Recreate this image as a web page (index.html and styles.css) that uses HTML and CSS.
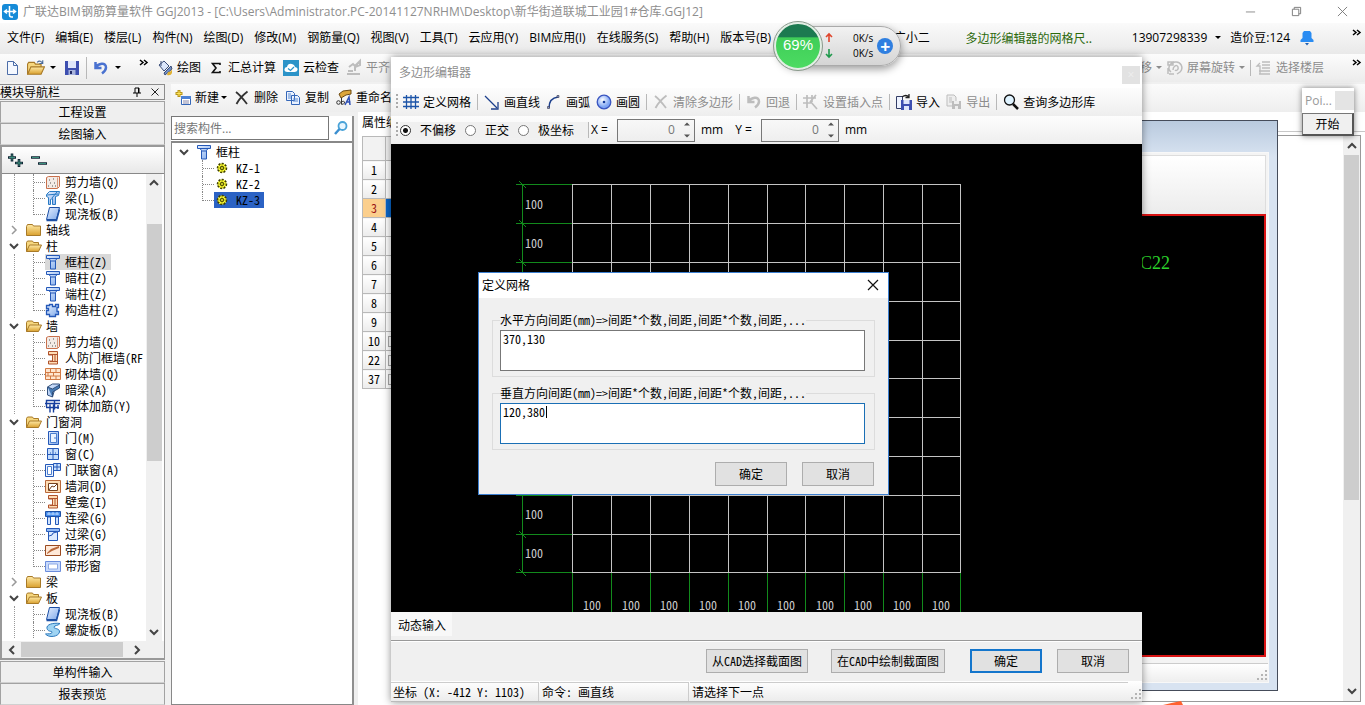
FILE: index.html
```html
<!DOCTYPE html>
<html lang="zh-CN">
<head>
<meta charset="utf-8">
<title>广联达BIM钢筋算量软件 GGJ2013</title>
<link rel="stylesheet" href="styles.css">
</head>
<body>
<svg class="defs" aria-hidden="true">
  <defs>
    <linearGradient id="gb" x2="1" y2="1"><stop offset="0" stop-color="#e4efff"/><stop offset="1" stop-color="#7fa9ea"/></linearGradient>
    <linearGradient id="gf" x2="0" y2="1"><stop offset="0" stop-color="#ffeaa6"/><stop offset="1" stop-color="#d9a02e"/></linearGradient>
    <radialGradient id="gc" cx=".4" cy=".35"><stop offset="0" stop-color="#fff"/><stop offset="1" stop-color="#7fa6f5"/></radialGradient>
  </defs>
  <symbol id="folder" viewBox="0 0 16 16"><path d="M.5 4.500l1-2h5l1 1.500h7v9.500h-14z" fill="url(#gf)" stroke="#a87a28"/></symbol>
  <symbol id="folderopen" viewBox="0 0 16 16"><path d="M.5 13.500v-9l1-1.500h5l1 1.500h5v3" fill="#f6d77f" stroke="#a87a28"/><path d="M.5 13.500l3-6.500h12l-3 6.500z" fill="url(#gf)" stroke="#a87a28"/></symbol>
  <symbol id="column" viewBox="0 0 16 16"><path d="M1.500 1.500h13v3h-2.500l-1.500 2v8.500h-5v-8.500l-1.500-2h-2.500z" fill="url(#gb)" stroke="#2458b8"/><path d="M2 4.500h12M5.500 7h5" stroke="#2458b8"/></symbol>
  <symbol id="swall" viewBox="0 0 16 16"><path d="M1.500 3.500l2-1h11v10l-2 2h-11z" fill="#f3ebe6" stroke="#c9704c"/><path d="M12.500 3.500v11" stroke="#d99a7c"/><path d="M4 6h1M8 5h1M5 9h1M9 9h1M3 12h1M7 12h1M10 12h1" stroke="#555"/></symbol>
  <symbol id="beam" viewBox="0 0 16 16"><path d="M1.500 4.500l3-3h10l-1 4-3 1v8h-3v-6l-2 1v5h-2v-7l-2-1z" fill="url(#gb)" stroke="#287bc4"/><path d="M2 5l11-1M7 8l5-6" stroke="#287bc4"/></symbol>
  <symbol id="slab" viewBox="0 0 16 16"><path d="M4.500 1.500h10l-3 12h-10z" fill="url(#gb)" stroke="#1d50a5"/><path d="M1.500 14.500h10l3-11" fill="none" stroke="#1d50a5" stroke-width="1.500"/></symbol>
  <symbol id="ccol" viewBox="0 0 16 16"><path d="M4.500 2.500h3v2h3v-2h3v3h-1.500v4h1.500v3h-3v2h-6v-2h-3v-4h2v-2h-2v-3h3z" fill="url(#gb)" stroke="#2458b8" stroke-width="1.300"/></symbol>
  <symbol id="door2" viewBox="0 0 16 16"><path d="M3.500 1.500h9v12.500h-9v-3h4v-6h-4z" fill="#ffdcb4" stroke="#b0532c"/><path d="M4 4.500h8M10 5v6M5 11.500h7" stroke="#b0532c"/></symbol>
  <symbol id="brick" viewBox="0 0 16 16"><path d="M.5 2.500h15v11h-15z" fill="#ffe6cf" stroke="#d17a45"/><path d="M1 6.500h14M1 10h14M5.500 3v3.500M11 3v3.500M3 6.500v3.500M8.500 6.500v3.500M5.500 10v3.500M11 10v3.500" stroke="#d17a45"/></symbol>
  <symbol id="hbeam" viewBox="0 0 16 16"><path d="M2.500 5l5-3h7v3l-5 3-2 7-5-2z" fill="url(#gb)" stroke="#304f7c"/><path d="M2.500 5l5 2 7-4v3l-7 4v5" fill="#477bb5" stroke="#304f7c"/></symbol>
  <symbol id="rebar" viewBox="0 0 16 16"><path d="M1.500 9V2.500h8v9M0 5.500h15M5 6.500v8M8.500 6.500v8M1 9.500h13M10 2.500h5M13 7v4" fill="none" stroke="#173f9e" stroke-width="1.400"/></symbol>
  <symbol id="door" viewBox="0 0 16 16"><path d="M3.500 1.500h10v13h-10z" fill="url(#gb)" stroke="#2458b8"/><path d="M5.500 3.500h6v9h-6zM10 7v2" fill="#eaf3ff" stroke="#4c7fd0"/></symbol>
  <symbol id="win" viewBox="0 0 16 16"><path d="M2.500 2.500h11v11h-11z" fill="#c6defd" stroke="#2458b8"/><path d="M8 3v10M3 8.500h10M5 7h1M10 7h1" stroke="#2458b8"/></symbol>
  <symbol id="doorwin" viewBox="0 0 16 16"><path d="M.5 2.500h8v12h-8z" fill="#eef5ff" stroke="#2458b8"/><path d="M2.500 4.500h4v8h-4z" fill="#fff" stroke="#4c7fd0"/><path d="M8.500 1.500h7v7h-7zM12 1.500v7M8.500 5h7" fill="#c6defd" stroke="#2458b8"/></symbol>
  <symbol id="hole" viewBox="0 0 16 16"><path d="M.5 2.500h15v12h-15z" fill="#ffdcb4" stroke="#b9683a"/><path d="M3.500 5.500h9v7h-9z" fill="#fff" stroke="#74401d"/><path d="M4 12l3-4 2 1 3-3" fill="none" stroke="#74401d"/></symbol>
  <symbol id="lbeam" viewBox="0 0 16 16"><path d="M.5 1.500h15v5h-15z" fill="#438aea" stroke="#1d50a5"/><path d="M2 4h12M4 2v3M8 2v3M12 2v3" stroke="#bddaff"/><path d="M2.500 7h3v7.500h-3zM10.500 7h3v7.500h-3z" fill="#cfe3ff" stroke="#2458b8"/></symbol>
  <symbol id="gbeam" viewBox="0 0 16 16"><path d="M1.500 2.500h13v3h-13z" fill="#8fb8f3" stroke="#2458b8"/><path d="M3.500 5.500h9v9h-9z" fill="#dceaff" stroke="#2458b8"/><path d="M4 10l3-1 1-2 4-1" fill="none" stroke="#2458b8"/></symbol>
  <symbol id="bhole" viewBox="0 0 16 16"><path d="M.5 3.500h15v10h-15z" fill="#ffe9d8" stroke="#9a4a20"/><path d="M2 11l4-4 8-3v2l-7 3-5 3z" fill="#b9683a"/></symbol>
  <symbol id="bwin" viewBox="0 0 16 16"><path d="M.5 3.500h15v10h-15z" fill="#c8dafb" stroke="#6a8cdc"/><path d="M3.500 6h9v5h-9z" fill="#fff" stroke="#8ea9e6"/></symbol>
  <symbol id="spiral" viewBox="0 0 16 16"><path d="M15 1.500C8 .5 1 2.500 2 6.500s6 2 5 4-4 1-6.500 1.500c3 4 13 3 14-2 .5-4-6-3-5.500-5s4-1 6-3.500z" fill="#9fd4f3" stroke="#2b78bd"/></symbol>
  <symbol id="gear" viewBox="0 0 12 12"><circle cx="6" cy="6" r="4.500" fill="#ff3" stroke="#3c3c00" stroke-width="1.500" stroke-dasharray="2 1.400"/><path d="M6 1.500v9M1.500 6h9M3 3l6 6M9 3l-6 6" stroke="#6b6b00" stroke-width=".6"/><circle cx="6" cy="6" r="1.500" fill="#ff3" stroke="#3c3c00"/></symbol>
  <symbol id="down" viewBox="0 0 10 10"><path d="M1 3l4 4 4-4" fill="none" stroke="#444" stroke-width="2"/></symbol>
  <symbol id="right" viewBox="0 0 10 10"><path d="M3 1l4 4-4 4" fill="none" stroke="#999" stroke-width="1.500"/></symbol>
  <symbol id="caret" viewBox="0 0 6 4"><path d="M0 0h6l-3 3z" fill="currentColor"/></symbol>
  <symbol id="more" viewBox="0 0 10 8"><path d="M1 1l3 2.500-3 2.500M5 1l3 2.500-3 2.500" fill="none" stroke="#000" stroke-width="1.500"/></symbol>
  <symbol id="undo" viewBox="0 0 16 16"><path d="M2.500 2v6h6M3 7.500c2-4 10-6 10 0 0 3-2 4.500-4 6" fill="none" stroke="currentColor" stroke-width="2.500"/></symbol>
  <symbol id="cross" viewBox="0 0 16 16"><path d="M2 2c4 3 8 8 11 12M13.500 1.500C9 5 5 9 2.500 14" fill="none" stroke="currentColor" stroke-width="1.800"/></symbol>
  <symbol id="grip" viewBox="0 0 14 14"><path d="M11 2h2v2h-2zM7 6h2v2H7zM11 6h2v2h-2zM3 10h2v2H3zM7 10h2v2H7zM11 10h2v2h-2z" fill="#b4b4b4"/></symbol>
</svg>

<div class="app">
  <header class="titlebar">
    <svg class="i16" viewBox="0 0 16 16"><rect width="16" height="16" rx="3" fill="#168bd8"/><path d="M7.500 2v9q0 2 2 2h1.500M3 7.500h10M5 5.500l-2.500 2 2.500 2M11 5.500l2.500 2-2.500 2" fill="none" stroke="#fff" stroke-width="1.500"/></svg>
    <span class="caption">广联达BIM钢筋算量软件 GGJ2013 - [C:\Users\Administrator.PC-20141127NRHM\Desktop\新华街道联城工业园1#仓库.GGJ12]</span>
    <div class="winbtns">
      <button aria-label="最小化"><svg viewBox="0 0 12 12"><path d="M1 6.500h10" stroke="#888"/></svg></button>
      <button aria-label="还原"><svg viewBox="0 0 12 12"><path d="M1.500 3.500h7v7h-7zM3.500 3.500v-2h7v7h-2" fill="none" stroke="#777"/></svg></button>
      <button aria-label="关闭"><svg viewBox="0 0 12 12"><path d="M1 1l10 10M11 1L1 11" stroke="#777"/></svg></button>
    </div>
  </header>

  <nav class="menubar">
    <button>文件(F)</button><button>编辑(E)</button><button>楼层(L)</button><button>构件(N)</button><button>绘图(D)</button><button>修改(M)</button><button>钢筋量(Q)</button><button>视图(V)</button><button>工具(T)</button><button>云应用(Y)</button><button>BIM应用(I)</button><button>在线服务(S)</button><button>帮助(H)</button><button>版本号(B)</button>
    <div class="account">
      <button class="user">广小二</button>
      <a class="tip" href="#">多边形编辑器的网格尺..</a>
      <button class="phone">13907298339 <svg class="caret"><use href="#caret"/></svg></button>
      <span class="beans">造价豆:124</span>
      <svg class="bell" viewBox="0 0 14 16"><path d="M4 1h6l1.500 2v5l2 2v2h-13v-2l2-2v-5z" fill="#2a8cf2"/><path d="M5 13h4l-2 2.500z" fill="#1c5fb4"/></svg>
      <svg class="more"><use href="#more"/></svg>
    </div>
  </nav>

  <div class="toolbar">
    <button aria-label="新建"><svg class="i16" viewBox="0 0 16 16"><path d="M3.500 1.500h6l4 4v9h-10z" fill="#f4f8ff" stroke="#4c6da8"/><path d="M9.500 1.500v4h4" fill="none" stroke="#4c6da8"/></svg></button>
    <button aria-label="打开" class="open"><svg class="i20" viewBox="0 0 16 16"><use href="#folderopen"/><path d="M9 3c2-2 4-1 5 1M14 1v3h-3" fill="none" stroke="#4a6a9a"/></svg><svg class="caret"><use href="#caret"/></svg></button>
    <button aria-label="保存"><svg class="i16" viewBox="0 0 16 16"><path d="M1 1h14v14H1z" fill="#3d4fb0"/><path d="M4 1h8v7H4z" fill="#dfe6fb"/><path d="M4.500 10h7v5h-7z" fill="#a9b4dc"/><path d="M6 11h2v3H6z" fill="#222b66"/></svg></button>
    <i class="sep"></i>
    <button aria-label="撤销" class="undo"><svg class="i16"><use href="#undo"/></svg><svg class="caret"><use href="#caret"/></svg></button>
    <svg class="more first"><use href="#more"/></svg>
    <button><svg class="i16" viewBox="0 0 16 16"><path d="M2 5l5-4 5 5-5 5z" fill="#dbe6fa" stroke="#3a4d78"/><path d="M4 1v5M14 6l-7 7 1 2 7-6z" fill="#718fc7" stroke="#3a4d78"/><path d="M11 12q4 0 4-4v5q-1 3-5 2z" fill="#e0b030"/></svg>绘图</button>
    <button class="sum"><svg class="i16" viewBox="0 0 16 16"><path d="M12 5V3.500H4.500L8 8l-3.500 4.500H12V11" fill="none" stroke="#111" stroke-width="1.600"/></svg>汇总计算</button>
    <button><svg class="i16" viewBox="0 0 16 16"><path d="M0 0h16v16H0z" fill="#2b93c8"/><path d="M4.500 12q-3.500 0-3-3 .5-2 2.500-2 1-4 5-3 2.500.5 3 3 3 .5 2.500 3-.5 2-3 2z" fill="#fff"/><path d="M5 8.500l2.500 2L11 7" fill="none" stroke="#2b93c8" stroke-width="1.300"/></svg>云检查</button>
    <button class="off"><svg class="i16" viewBox="0 0 16 16"><path d="M1 14h13M2 11h5M9 11V6l5-5v4l-5 2M3 7l4-3 2 2" fill="none" stroke="currentColor" stroke-width="2"/></svg>平齐</button>
    <div class="viewtools">
      <button class="off">移 <svg class="caret"><use href="#caret"/></svg></button>
      <button class="off"><svg class="i16" viewBox="0 0 16 16"><path d="M1 2h5v3H1zM2 14h5M4 12c-4-3-2-9 4-10s9 6 5 10l-3 2M6 10c0-4 4-6 5-3s-2 4-3 3M1 8v6" fill="none" stroke="currentColor" stroke-width="1.500"/></svg>屏幕旋转<svg class="caret"><use href="#caret"/></svg></button>
      <i class="sep"></i>
      <button class="off"><svg class="i16" viewBox="0 0 16 16"><path d="M6 2h8M6 5h8M6 8h8M3 11h11M3 14h11M4 3L1 6h3v8" fill="none" stroke="currentColor" stroke-width="1.300"/></svg>选择楼层</button>
      <svg class="more"><use href="#more"/></svg>
    </div>
  </div>

  <div class="workspace">
    <aside class="nav">
      <div class="navhead"><span>模块导航栏</span><button aria-label="固定"><svg viewBox="0 0 10 10"><path d="M3 1h4v5M3 1v5M1 6h8M5 6v4M6.500 1v5" fill="none" stroke="#000"/></svg></button><button aria-label="关闭"><svg viewBox="0 0 10 10"><path d="M1.500 1.500l7 7M8.500 1.500l-7 7" stroke="#222"/></svg></button></div>
      <button class="navbtn">工程设置</button>
      <button class="navbtn">绘图输入</button>
      <div class="navbox">
        <div class="expand">
          <button aria-label="全部展开"><svg viewBox="0 0 18 16"><path d="M1 5.500h8M5 1.500v8M8 11h8M12 7v8" stroke="#123" stroke-width="2.600"/><path d="M2 5.500h6M5 2.500v6M9 11h6M12 8v6" stroke="#3b8f7c"/></svg></button>
          <button aria-label="全部折叠"><svg viewBox="0 0 18 16"><path d="M1 5.500h9M8 11.500h9" stroke="#123" stroke-width="2.600"/><path d="M2 5.500h7M9 11.500h7" stroke="#3b8f7c"/></svg></button>
        </div>
        <div class="treewrap">
          <ul class="tree">
            <li><ul class="kids">
              <li><svg><use href="#swall"/></svg>剪力墙(Q)</li><li><svg><use href="#beam"/></svg>梁(L)</li><li><svg><use href="#slab"/></svg>现浇板(B)</li></ul></li>
            <li><div class="node"><svg class="chev"><use href="#right"/></svg><svg><use href="#folder"/></svg>轴线</div></li>
            <li><div class="node"><svg class="chev"><use href="#down"/></svg><svg><use href="#folderopen"/></svg>柱</div><ul class="kids">
              <li><span class="sel"><svg><use href="#column"/></svg>框柱(Z)</span></li><li><svg><use href="#column"/></svg>暗柱(Z)</li><li><svg><use href="#column"/></svg>端柱(Z)</li><li><svg><use href="#ccol"/></svg>构造柱(Z)</li></ul></li>
            <li><div class="node"><svg class="chev"><use href="#down"/></svg><svg><use href="#folderopen"/></svg>墙</div><ul class="kids">
              <li><svg><use href="#swall"/></svg>剪力墙(Q)</li><li><svg><use href="#door2"/></svg>人防门框墙(RF</li><li><svg><use href="#brick"/></svg>砌体墙(Q)</li><li><svg><use href="#hbeam"/></svg>暗梁(A)</li><li><svg><use href="#rebar"/></svg>砌体加筋(Y)</li></ul></li>
            <li><div class="node"><svg class="chev"><use href="#down"/></svg><svg><use href="#folderopen"/></svg>门窗洞</div><ul class="kids">
              <li><svg><use href="#door"/></svg>门(M)</li><li><svg><use href="#win"/></svg>窗(C)</li><li><svg><use href="#doorwin"/></svg>门联窗(A)</li><li><svg><use href="#hole"/></svg>墙洞(D)</li><li><svg><use href="#door2"/></svg>壁龛(I)</li><li><svg><use href="#lbeam"/></svg>连梁(G)</li><li><svg><use href="#gbeam"/></svg>过梁(G)</li><li><svg><use href="#bhole"/></svg>带形洞</li><li><svg><use href="#bwin"/></svg>带形窗</li></ul></li>
            <li><div class="node"><svg class="chev"><use href="#right"/></svg><svg><use href="#folder"/></svg>梁</div></li>
            <li><div class="node"><svg class="chev"><use href="#down"/></svg><svg><use href="#folderopen"/></svg>板</div><ul class="kids cut">
              <li><svg><use href="#slab"/></svg>现浇板(B)</li><li><svg><use href="#spiral"/></svg>螺旋板(B)</li></ul></li>
          </ul>
          <div class="vbar"><svg class="arr up"><use href="#down"/></svg><i class="thumb"></i><svg class="arr"><use href="#down"/></svg></div>
        </div>
        <div class="hbar"><svg class="arr left"><use href="#down"/></svg><i class="thumb"></i><svg class="arr rt"><use href="#down"/></svg></div>
      </div>
      <button class="navbtn">单构件输入</button>
      <button class="navbtn">报表预览</button>
    </aside>

    <main class="main">
      <div class="subbar">
        <button><svg class="i16" viewBox="0 0 16 16"><path d="M6.500 6.500h9v8h-9z" fill="#fff" stroke="#3567b8"/><path d="M6 6h10v3H6z" fill="#4c82d6"/><path d="M8 11h6M8 13h6" stroke="#88a"/><path d="M4 0v7M.5 3.500h7" stroke="#b8961a" stroke-width="3"/><path d="M4 1v5M1.500 3.500h5" stroke="#ffe55c"/></svg>新建<svg class="caret"><use href="#caret"/></svg></button>
        <button><svg class="i16 dark"><use href="#cross"/></svg>删除</button>
        <button><svg class="i16" viewBox="0 0 16 16"><path d="M1.500 1.500h6l2 2v7h-8zM6.500 5.500h6l2 2v7h-8z" fill="#eaf2ff" stroke="#3567b8"/><path d="M3 4h3M3 6h3M3 8h3M8 9h5M8 11h5" stroke="#5d8bd0"/></svg>复制</button>
        <button><svg class="i16" viewBox="0 0 16 16"><path d="M3 4l4-3 8-1v4l-5 1-5 3z" fill="#dba53b" stroke="#6d4a12"/><path d="M9 15l4-8 1 8M10.500 12h4" fill="none" stroke="#2d4fb5" stroke-width="1.500"/><circle cx="2.500" cy="12.500" r="1.800" fill="none" stroke="#333"/><path d="M5.500 8v6.500M5.500 12q3-2 3 1-1 2-3 1" fill="none" stroke="#333"/></svg>重命名</button>
      </div>
      <div class="panes">
        <section class="parts">
          <div class="search"><input type="text" aria-label="搜索构件" placeholder="搜索构件..."><button aria-label="搜索"><svg class="i16" viewBox="0 0 16 16"><circle cx="9.500" cy="6" r="4" fill="#e8f6ff" stroke="#4aa3d8" stroke-width="1.800"/><path d="M6.500 9L2 14" stroke="#3b8fd0" stroke-width="2.500"/></svg></button></div>
          <div class="partlist">
            <div class="node"><svg class="chev"><use href="#down"/></svg><svg><use href="#column"/></svg>框柱</div>
            <ul class="kids">
              <li><span><svg><use href="#gear"/></svg>KZ-1</span></li><li><span><svg><use href="#gear"/></svg>KZ-2</span></li><li><span class="on"><svg><use href="#gear"/></svg>KZ-3</span></li>
            </ul>
          </div>
        </section>
        <section class="props">
          <div class="tab">属性编辑</div>
          <table>
            <tbody>
              <tr class="h"><th></th><td></td></tr>
              <tr><th>1</th><td></td></tr><tr><th>2</th><td></td></tr><tr class="cur"><th>3</th><td></td></tr><tr><th>4</th><td></td></tr><tr><th>5</th><td></td></tr><tr><th>6</th><td></td></tr><tr><th>7</th><td></td></tr><tr><th>8</th><td></td></tr><tr><th>9</th><td></td></tr>
              <tr><th>10</th><td><i class="plus"></i></td></tr><tr><th>22</th><td><i class="plus"></i></td></tr><tr><th>37</th><td><i class="plus"></i></td></tr>
            </tbody>
          </table>
        </section>
        <section class="mdi">
          <div class="mditop"></div>
          <div class="mdibody">
            <div class="mdibar"><svg class="arr up"><use href="#down"/></svg><i class="thumb"></i><svg class="arr"><use href="#down"/></svg></div>
          </div>
          <div class="child">
            <div class="childin">
              <div class="childtools"></div>
              <div class="childcanvas"><span>C22</span></div>
              <div class="childstatus"><svg class="grip"><use href="#grip"/></svg></div>
            </div>
          </div>
          <svg class="orange" viewBox="0 0 20 4"><path d="M0 4q8-2 18-4l2 4z" fill="#ff6230"/></svg>
        </section>
      </div>
    </main>
  </div>
</div>

<section class="editor" aria-label="多边形编辑器">
  <header><span>多边形编辑器</span><button aria-label="关闭">×</button></header>
  <div class="etools">
    <i class="dots"></i>
    <button><svg class="i16" viewBox="0 0 16 16"><path d="M3.500 1v14M8 1v14M12.500 1v14M0 3.500h16M0 8h16M0 12.500h16" stroke="#1c54a8" stroke-width="1.300"/></svg>定义网格</button>
    <i class="sep"></i>
    <button><svg class="i16" viewBox="0 0 16 16"><path d="M1 2l12 12" stroke="#1c3f8c" stroke-width="1.300"/><path d="M14 8v7H7" fill="none" stroke="#1c3f8c" stroke-width="1.300"/></svg>画直线</button>
    <button><svg class="i16" viewBox="0 0 16 16"><path d="M3 14Q3 4 12 3" fill="none" stroke="#1c3f8c" stroke-width="1.500"/><path d="M1.500 12.500h2v2h-2zM11 1.500h2v2h-2z" fill="#8b9bd0" stroke="#334" stroke-width=".6"/></svg>画弧</button>
    <button><svg class="i16" viewBox="0 0 16 16"><circle cx="8" cy="8" r="6.800" fill="url(#gc)" stroke="#3a55c0" stroke-width="1.300"/><circle cx="8" cy="8" r="1.300" fill="#123a9c"/></svg>画圆</button>
    <i class="sep"></i>
    <button class="off"><svg class="i16"><use href="#cross"/></svg>清除多边形</button>
    <i class="sep"></i>
    <button class="off"><svg class="i16"><use href="#undo"/></svg>回退</button>
    <i class="sep"></i>
    <button class="off"><svg class="i16" viewBox="0 0 16 16"><path d="M4 1v13M9 1v7M0 4h13M0 9h8M7 7l7 8M13 1L7 8" stroke="currentColor" stroke-width="1.700"/></svg>设置插入点</button>
    <i class="sep"></i>
    <button><svg class="i16" viewBox="0 0 16 16"><path d="M.5 2.500h6v12h-6z" fill="#eef3ff" stroke="#333d66"/><path d="M5 6h11v10H5z" fill="#3d4fb0"/><path d="M7.500 6h6v4h-6zM8 12h5v4H8z" fill="#dfe6fb"/><path d="M6 3q4-3 7 0M13 0v3.500h-3.500" fill="none" stroke="#222" stroke-width="1.300"/></svg>导入</button>
    <button class="off"><svg class="i16" viewBox="0 0 16 16"><path d="M1 1h7l2 2v9H1zM3 4h3M3 6h3M3 8h3" fill="#eee" stroke="currentColor"/><path d="M6 7h9v8H6z" fill="currentColor"/><path d="M8 7h5v3H8zM9 12h3v3H9z" fill="#eee"/></svg>导出</button>
    <i class="sep"></i>
    <button><svg class="i16" viewBox="0 0 16 16"><circle cx="6.500" cy="6" r="5" fill="#dff3ff" stroke="#111" stroke-width="1.300"/><path d="M10 10l5 5" stroke="#111" stroke-width="2.500"/></svg>查询多边形库</button>
  </div>
  <div class="ecoords">
    <i class="dots"></i>
    <div class="radios">
      <label><input type="radio" name="mode" checked>不偏移</label>
      <label><input type="radio" name="mode">正交</label>
      <label><input type="radio" name="mode">极坐标</label>
    </div>
    <i class="sep"></i>
    <label for="dx">X =</label>
    <span class="spin"><input id="dx" type="text" value="0"><svg viewBox="0 0 8 18"><path d="M1 4.500l3-3 3 3zM1 13.500l3 3 3-3z" fill="#555"/></svg></span>
    <span class="unit">mm</span>
    <label for="dy">Y =</label>
    <span class="spin"><input id="dy" type="text" value="0"><svg viewBox="0 0 8 18"><path d="M1 4.500l3-3 3 3zM1 13.500l3 3 3-3z" fill="#555"/></svg></span>
    <span class="unit">mm</span>
  </div>
  <div class="canvas">
    <svg width="751" height="468">
      <path d="M181.500 40v389M220.500 40v389M259.500 40v389M298.500 40v389M337.500 40v389M376.500 40v389M414.500 40v389M453.500 40v389M492.500 40v389M531.500 40v389M569.500 40v389M181 40.500h389M181 79.500h389M181 118.500h389M181 157.500h389M181 196.500h389M181 234.500h389M181 273.500h389M181 312.500h389M181 351.500h389M181 390.500h389M181 428.500h389" stroke="#c4c4c4"/>
      <path d="M131.500 40v389M125 40.500h56M125 79.500h56M125 118.500h56M125 351.500h56M125 390.500h56M125 428.500h56M181.500 429v39M220.500 429v39M259.500 429v39M298.500 429v39M337.500 429v39M376.500 429v39M414.500 429v39M453.500 429v39M492.500 429v39M531.500 429v39M569.500 429v39M128 37l7 7M128 76l7 7M128 115l7 7M128 387l7 7M128 425l7 7" stroke="#128a1c"/>
      <g class="dim">
        <text x="134" y="65">100</text><text x="134" y="104">100</text><text x="134" y="375">100</text><text x="134" y="414">100</text>
        <text x="192" y="466">100</text><text x="231" y="466">100</text><text x="269" y="466">100</text><text x="308" y="466">100</text><text x="347" y="466">100</text><text x="386" y="466">100</text><text x="425" y="466">100</text><text x="463" y="466">100</text><text x="502" y="466">100</text><text x="541" y="466">100</text>
      </g>
    </svg>
  </div>
  <div class="dyn"><button>动态输入</button></div>
  <div class="actions"><button>从CAD选择截面图</button><button>在CAD中绘制截面图</button><button class="ok">确定</button><button class="cancel">取消</button></div>
  <footer><span class="c1">坐标 (X: -412 Y: 1103)</span><span class="c2">命令: 画直线</span><span class="c3">请选择下一点</span><svg class="grip"><use href="#grip"/></svg></footer>
</section>

<section class="dialog" role="dialog" aria-label="定义网格">
  <header><span>定义网格</span><button aria-label="关闭"><svg viewBox="0 0 12 12"><path d="M1 1l10 10M11 1L1 11" stroke="#111" stroke-width="1.200"/></svg></button></header>
  <fieldset><legend><label for="hs">水平方向间距(mm)=&gt;间距*个数,间距,间距*个数,间距,...</label></legend><textarea id="hs">370,130</textarea></fieldset>
  <fieldset class="focus"><legend><label for="vs">垂直方向间距(mm)=&gt;间距*个数,间距,间距*个数,间距,...</label></legend><textarea id="vs">120,380</textarea><i class="ibeam"></i></fieldset>
  <div class="dbtns"><button>确定</button><button>取消</button></div>
</section>

<section class="poi" aria-label="Poi">
  <header><span>Poi...</span><i></i></header>
  <button>开始</button>
</section>

<section class="net" aria-label="网速">
  <div class="ball">69%</div>
  <svg class="arrows" viewBox="0 0 8 26"><path d="M4 1v8M1 4l3-3 3 3" fill="none" stroke="#e0452c" stroke-width="1.600"/><path d="M4 16v8M1 21l3 3 3-3" fill="none" stroke="#1f9a4c" stroke-width="1.600"/></svg>
  <div class="rates"><span>0K/s</span><span>0K/s</span></div>
  <button aria-label="加速">+</button>
</section>
</body>
</html>
```

FILE: styles.css
```css
* { box-sizing: border-box; }
html, body { height: 100%; }
body {
  margin: 0;
  overflow: hidden;
  background: #f0f0f0;
  color: #000;
  font: 12px/16px "Open Sans", "Noto Sans CJK SC", sans-serif;
}
button, input, textarea { font: inherit; color: inherit; }
button { background: none; border: 0; padding: 0; white-space: nowrap; }
svg { display: block; flex: none; overflow: visible; }
ul { list-style: none; margin: 0; padding: 0; }
.defs { position: absolute; width: 0; height: 0; }
.i16 { width: 16px; height: 16px; }
.i20 { width: 18px; height: 18px; }
.dark { color: #333; }
.caret { width: 6px; height: 4px; }
.more { width: 10px; height: 8px; }
.sep { flex: none; width: 1px; height: 16px; background: #b8b8b8; }
.off { color: #8c8c8c; }
.off .i16 { color: #bdbdbd; }

.app { height: 100vh; display: flex; flex-direction: column; }
.titlebar { flex: none; height: 23px; display: flex; align-items: center; padding-left: 2px; gap: 5px; background: #fff; }
.caption { color: #8e8e8e; white-space: nowrap; font-family: "Open Sans", "Noto Sans CJK SC", sans-serif; }
.winbtns { margin-left: auto; display: flex; }
.winbtns button { width: 46px; height: 22px; display: grid; place-items: center; }
.winbtns svg { width: 11px; height: 11px; }

.menubar { flex: none; height: 31px; display: flex; align-items: center; gap: 11px; padding: 0 0 2px 7px; background: linear-gradient(#fafafa, #e9e9e9); }
.account { margin-left: auto; height: 100%; display: flex; align-items: center; flex: none; }
.user { margin-right: 19px; }
.tip { width: 160px; text-align: center; color: #2c6a0c; text-decoration: none; font-family: "Noto Sans CJK SC", sans-serif; }
.phone { display: flex; align-items: center; gap: 8px; margin-left: 23px; }
.beans { margin-left: 9px; }
.bell { width: 14px; height: 16px; margin-left: 10px; }
.account .more { margin: 0 3px 10px 38px; }

.toolbar { flex: none; height: 28px; display: flex; align-items: center; padding-left: 4px; background: linear-gradient(#fcfcfc, #ececec); white-space: nowrap; }
.toolbar button, .subbar button { display: flex; align-items: center; gap: 4px; }
.toolbar .open { margin: 0 8px 0 7px; gap: 5px; }
.toolbar .undo { margin-left: 6px; gap: 6px; }
.toolbar .undo .i16 { color: #4a72d0; }
.toolbar > .sep { margin-left: 6px; height: 22px; }
.more.first { margin: 0 8px 10px 18px; }
.toolbar .sum { margin: 0 7px; }
.toolbar > .off { margin-left: 7px; }
.viewtools { margin-left: auto; display: flex; align-items: center; gap: 5px; }
.viewtools .more { margin: 0 3px 10px 23px; }

.workspace { flex: 1; min-height: 0; display: flex; padding-top: 2px; }
.nav { flex: none; width: 165px; display: flex; flex-direction: column; font-family: "Noto Sans Mono CJK SC", "Noto Sans CJK SC", sans-serif; }
.navhead { height: 16px; display: flex; align-items: center; border: 1px solid #8c8c8c; border-left: 0; margin-bottom: 1px; }
.navhead span { margin-right: auto; }
.navhead button { width: 18px; display: grid; place-items: center; }
.navhead svg { width: 10px; height: 10px; }
.navbtn { flex: none; height: 22px; border: 1px solid #a2a2a2; border-bottom-color: #d0d0d0; background: #efefef; }
.navbox { flex: 1; min-height: 0; display: flex; flex-direction: column; border: 2px solid #999; border-right-width: 1px; margin-bottom: 1px; }
.expand { flex: none; height: 27px; display: flex; align-items: center; gap: 5px; padding-left: 5px; background: linear-gradient(#fff, #e8e8e8); border-bottom: 1px solid #888; }
.expand svg { width: 18px; height: 16px; }
.treewrap { flex: 1; min-height: 0; display: flex; padding-right: 2px; background: #fff; }
.tree { flex: 1; min-width: 0; overflow: hidden; }
.node { height: 16px; display: flex; align-items: center; white-space: nowrap; padding-left: 7px; }
.node svg { width: 16px; height: 16px; margin-right: 4px; }
.node .chev { width: 10px; height: 10px; margin-right: 7px; }
.kids { margin-left: 12px; border-left: 1px dotted #999; }
.kids li { height: 16px; display: flex; align-items: center; white-space: nowrap; padding-left: 18px; }
.kids li::before { content: ""; flex: none; width: 11px; height: 16px; border-left: 1px dotted #888; background: repeating-linear-gradient(90deg, #888 0 1px, #fff 1px 2px) 0 8px / 100% 1px no-repeat; }
.kids:not(.cut) li:last-child::before { height: 9px; align-self: flex-start; }
.kids svg { width: 16px; height: 16px; margin-right: 4px; }
.sel { display: flex; padding-right: 4px; background: #d9d9d9; }
.vbar { flex: none; width: 16px; display: flex; flex-direction: column; align-items: center; padding: 4px 0; background: #f0f0f0; }
.arr { width: 10px; height: 10px; }
.up { transform: rotate(180deg); }
.left { transform: rotate(90deg); }
.rt { transform: rotate(-90deg); }
.thumb { background: #cdcdcd; }
.vbar .thumb { width: 15px; flex: 1; margin-top: 36px; }
.vbar .arr:last-child { margin-top: 166px; }
.hbar { flex: none; height: 17px; display: flex; align-items: center; padding: 0 22px 0 5px; gap: 4px; background: #f0f0f0; }
.hbar .thumb { flex: 1; height: 15px; }
.hbar .rt { margin-left: 5px; }

.main { flex: 1; min-width: 0; display: flex; flex-direction: column; padding-left: 6px; }
.subbar { flex: none; height: 28px; display: flex; align-items: center; gap: 7px; padding-left: 4px; background: linear-gradient(#fbfbfb, #eee); }
.subbar .caret { margin-left: -2px; }
.panes { flex: 1; min-height: 0; display: flex; }
.parts { flex: none; width: 183px; display: flex; flex-direction: column; margin-top: 4px; border-right: 2px solid #8f8f8f; }
.search { display: flex; height: 25px; padding-bottom: 1px; background: #fff; }
.search input { width: 158px; height: 24px; border: 1px solid #777; padding: 0 2px; background: #fff; }
.search input::placeholder { color: #777; opacity: 1; }
.search button { flex: 1; display: grid; place-items: center; }
.partlist { flex: 1; background: #fff; border: 1px solid #888; border-top-width: 2px; border-right: 0; padding-top: 1px; font-family: "Noto Sans Mono CJK SC", "Noto Sans CJK SC", sans-serif; }
.partlist .kids { border: 0; }
.partlist .kids li span { display: flex; align-items: center; padding-right: 4px; height: 16px; }
.partlist .kids svg { width: 12px; height: 12px; margin: 0 8px 0 2px; }
.partlist .on { background: #2b62c4; }
.props { flex: none; width: 60px; padding-left: 4px; background: #fff; border-left: 4px solid #efefef; overflow: hidden; }
.tab { height: 24px; line-height: 20px; white-space: nowrap; font-family: "Noto Sans CJK SC", sans-serif; }
.props table { width: 56px; border-collapse: collapse; table-layout: fixed; font-family: "Noto Sans Mono CJK SC", "Noto Sans CJK SC", sans-serif; }
.props th, .props td { height: 19px; padding: 0; border: 1px solid #b9b9b9; line-height: 16px; }
.props th { width: 23px; font-weight: normal; background: linear-gradient(#fff, #ececec); }
.props .h th, .props .h td { height: 24px; background: #f2f2f2; }
.props .cur th { background: #fbcf8d; color: #9a1414; }
.props .cur td { background: #0a66c8; }
.plus { display: block; width: 11px; height: 11px; margin-left: 2px; border: 1px solid #aaa; }

.mdi { flex: 1; min-width: 0; position: relative; display: flex; flex-direction: column; background: #fff; }
.mditop { flex: none; height: 20px; border-bottom: 1px solid #c8c8c8; }
.mdibody { flex: 1; margin: 3px 4px 3px 0; border: 1px solid #999; display: flex; justify-content: flex-end; }
.mdibar { width: 17px; display: flex; flex-direction: column; align-items: center; padding: 5px 0; background: #f0f0f0; }
.mdibar .thumb { width: 15px; flex: 1; margin: 4px 0 186px; }
.child { position: absolute; right: 87px; top: 8px; bottom: 14px; width: 880px; border: 1px solid #454c5a; background: linear-gradient(#b9cade, #d8e3f1 36px); padding: 31px 8px 7px; }
.childin { height: 100%; display: flex; flex-direction: column; background: #f4f4f4; border: 1px solid #f8f8f8; }
.childtools { height: 59px; margin: 2px 2px 0; background: linear-gradient(#fff, #ececec); border: 1px solid #ddd; border-bottom: 0; }
.childcanvas { flex: 1; margin: 0 2px; border: 2px solid #d91414; background: #000; color: #2bd22b; font: 18px/24px "Liberation Serif", serif; text-align: right; padding: 35px 94px 0 0; }
.childstatus { height: 19px; margin-top: 6px; border-top: 1px solid #ccc; background: linear-gradient(#fff, #eee); display: flex; justify-content: flex-end; align-items: flex-end; }
.grip { width: 14px; height: 14px; }
.orange { position: absolute; right: 182px; bottom: 0; width: 20px; height: 4px; }

.editor { position: absolute; left: 391px; top: 57px; width: 751px; bottom: 3px; display: flex; flex-direction: column; background: #f0f0f0; box-shadow: 0 0 8px rgba(0, 0, 0, .45); }
.editor header { flex: none; height: 31px; display: flex; align-items: center; justify-content: space-between; padding: 0 2px 0 8px; background: #fff; color: #8e8e8e; }
.editor header button { width: 18px; height: 18px; margin-top: 4px; background: #e2e2e2; color: #eee; }
.etools, .ecoords { flex: none; height: 28px; display: flex; align-items: center; background: linear-gradient(#fdfdfd, #eee); }
.etools { padding-bottom: 1px; }
.dots { width: 2px; height: 16px; margin: 0 2px 0 5px; background: repeating-linear-gradient(#aaa 0 2px, transparent 2px 4px); }
.etools button { display: flex; align-items: center; gap: 4px; padding: 0 3px; font-family: "Noto Sans CJK SC", sans-serif; }
.etools .sep { margin: 0 3px; }
.radios { display: flex; align-items: center; gap: 9px; padding-right: 14px; background: #f0f0f0; font-family: "Noto Sans CJK SC", sans-serif; }
.radios label { display: flex; align-items: center; gap: 9px; }
.radios input { appearance: none; width: 11px; height: 11px; margin: 0; border: 1px solid #777; border-radius: 50%; background: #fff; }
.radios input:checked { background: radial-gradient(#111 0 2px, #fff 3px); border-color: #333; }
.ecoords > label { margin: 0 9px 0 2px; }
.spin { width: 78px; height: 23px; display: flex; align-items: center; border: 1px solid #777; background: linear-gradient(#f8f8f8, #eee); color: #777; }
.spin input { flex: 1; min-width: 0; border: 0; padding: 0 8px 0 0; background: none; text-align: right; }
.spin svg { width: 8px; height: 18px; margin-right: 3px; }
.unit { margin: 0 10px 0 6px; }
.canvas { flex: 1; min-height: 0; background: #000; overflow: hidden; }
.dim { fill: #ccc; font: 12px "Noto Sans Mono CJK SC", "Liberation Mono", monospace; }
.dyn { flex: none; height: 29px; border-bottom: 1px solid #999; }
.dyn button { height: 24px; padding: 2px 6px 0 7px; background: #f8f8f8; font-family: "Noto Sans CJK SC", sans-serif; }
.actions { flex: none; height: 40px; display: flex; justify-content: flex-end; align-items: center; gap: 23px; padding: 0 13px 2px 0; border-top: 1px solid #fff; }
.actions button, .dbtns button { min-width: 72px; height: 24px; padding: 0 5px; border: 1px solid #adadad; background: #e1e1e1; font-family: "Noto Sans Mono CJK SC", "Noto Sans CJK SC", sans-serif; }
.actions .ok { border: 2px solid #1476cc; margin-left: 2px; }
.actions .cancel { margin-left: -8px; }
.editor footer { flex: none; height: 21px; display: flex; align-items: center; background: linear-gradient(#fff, #ececec); border-bottom: 1px solid #bbb; font-family: "Noto Sans Mono CJK SC", "Noto Sans CJK SC", sans-serif; }
.editor footer span { height: 19px; line-height: 18px; padding-left: 2px; border-top: 1px solid #ccc; border-right: 1px solid #ccc; white-space: nowrap; }
.c1 { width: 148px; }
.c2 { width: 149px; margin-left: 1px; }
.editor footer .c3 { flex: 1; margin-left: 1px; border-right: 0; }
.editor footer .grip { align-self: flex-end; }

.dialog { position: absolute; left: 478px; top: 272px; width: 411px; border: 1px solid #3c7fd0; background: #f0f0f0; font-family: "Noto Sans Mono CJK SC", "Noto Sans CJK SC", sans-serif; }
.dialog header { height: 25px; display: flex; align-items: center; justify-content: space-between; padding: 0 9px 2px 3px; background: #fff; }
.dialog header svg { width: 12px; height: 12px; }
.dialog fieldset { position: relative; min-width: 0; height: 65px; margin: 14px 13px 0; padding: 2px 9px 5px 7px; border: 1px solid #dcdcdc; }
.dialog fieldset.focus { margin-top: 8px; }
.dialog legend { padding: 0; line-height: 16px; white-space: nowrap; }
.dialog textarea { display: block; width: 100%; height: 41px; padding: 0 2px; border: 1px solid #777; background: #fff; resize: none; overflow: hidden; line-height: 16px; }
.dialog .focus textarea { border-color: #1a6fb5; }
.ibeam { position: absolute; left: 53px; top: 5px; width: 1px; height: 12px; background: #000; }
.dbtns { display: flex; justify-content: flex-end; gap: 15px; padding: 12px 14px 8px; }

.poi { position: absolute; right: 11px; top: 88px; width: 52px; box-shadow: 0 0 6px rgba(0, 0, 0, .5); background: #fff; }
.poi header { height: 25px; display: flex; align-items: center; justify-content: space-between; padding-left: 3px; color: #999; }
.poi header i { width: 19px; height: 19px; background: #e4e4e4; }
.poi button { display: block; width: 100%; height: 23px; border: 1px solid #777; border-right: 2px solid #555; border-bottom: 2px solid #555; background: #f0f0f0; font-family: "Noto Sans CJK SC", sans-serif; }

.net { position: absolute; left: 778px; top: 26px; width: 123px; height: 40px; display: flex; align-items: center; border: 1px solid #aaa; border-radius: 20px; background: linear-gradient(#f2f2f2, #d5d5d5); box-shadow: 0 3px 8px rgba(0, 0, 0, .4); }
.ball { flex: none; width: 48px; height: 48px; margin-left: -5px; border: 2px solid #e2eee4; outline: 1px solid #8a9a8c; border-radius: 50%; background: linear-gradient(#1c7a50 0 30%, #3fce58 31%, #4cdb62); color: #fff; font: 15px/42px "Liberation Sans", sans-serif; text-align: center; }
.arrows { width: 8px; height: 26px; margin-left: 3px; }
.rates { display: flex; flex-direction: column; margin-left: 20px; font-size: 10px; line-height: 15px; }
.net button { width: 16px; height: 16px; margin-left: 4px; border-radius: 50%; background: #2f7fe0; color: #fff; font: bold 17px/15px "Liberation Sans", sans-serif; }
```
